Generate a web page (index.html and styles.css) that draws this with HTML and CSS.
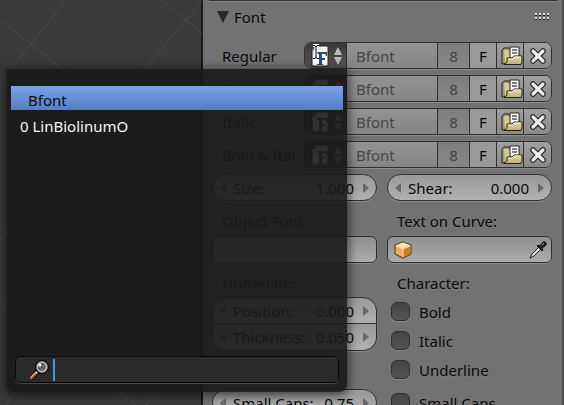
FILE: index.html
```html
<!DOCTYPE html>
<html lang="en">
<head>
<meta charset="utf-8">
<title>Font panel</title>
<link rel="stylesheet" href="styles.css">
</head>
<body>
<svg width="0" height="0" class="defs" aria-hidden="true">
  <defs>
    <linearGradient id="paper" x1="0" y1="0" x2="1" y2="1"><stop offset="0" stop-color="#d0d0d0"/><stop offset=".5" stop-color="#fff"/></linearGradient>
    <linearGradient id="wood" x1="0" y1="0" x2="0" y2="1"><stop offset="0" stop-color="#e5dca9"/><stop offset="1" stop-color="#bcae78"/></linearGradient>
    <radialGradient id="lens" cx=".3" cy=".35" r=".8"><stop offset="0" stop-color="#d8d8e4"/><stop offset=".3" stop-color="#55525a"/><stop offset="1" stop-color="#b8988c"/></radialGradient>
    <symbol id="font" viewBox="0 0 18 22">
      <path d="M1 5 5 1H17V21H1Z" fill="url(#paper)" stroke="#222"/>
      <path d="M1 5H5V1Z" fill="#aaa" stroke="#555" stroke-width=".6"/>
      <path d="M6 7H16V11H15L14 9H11V13H14V15H11V19H12V20H6V19H8V9H6Z" fill="#244a8c"/>
    </symbol>
    <symbol id="folder" viewBox="0 0 22 20">
      <path d="M1 18V4L3 2H8L10 4V17Z" fill="#a39b70" stroke="#25230f"/>
      <path d="M3 4H7L9 6V16L4 17Z" fill="#d3cb98"/>
      <path d="M9 1H18V12H9Z" fill="#fff" stroke="#222"/>
      <path d="M11 4H16M11 7H16" stroke="#555" stroke-width="1.400"/>
      <path d="M3 18.500 6 16V12H11L13 10H21V16L20 18.500Z" fill="url(#wood)" stroke="#25230f"/>
      <path d="M7 13H11L13 11H20" fill="none" stroke="#f7f0c9"/>
    </symbol>
    <symbol id="cross" viewBox="0 0 18 18">
      <path d="M4 4 14 14M14 4 4 14" stroke="#222" stroke-width="5.600" stroke-linecap="round"/>
      <path d="M4 4 14 14M14 4 4 14" stroke="#eee" stroke-width="3.200" stroke-linecap="round"/>
    </symbol>
  </defs>
</svg>
<main class="screen">
  <section class="viewport" aria-label="3D view">
    <svg class="gridlines" width="202" height="405" viewBox="0 0 202 405" fill="none" stroke="#505050">
      <path d="M0 20 202 179M161 0 202 33M66 0 0 83M202 1 0 240M0 302 136 405M202 190 5 405M202 335 145 405"/>
    </svg>
  </section>
  <aside class="panel">
    <header class="head"><svg width="12" height="12" viewBox="0 0 12 12"><path d="M0 0H12L6 12Z" fill="#292929"/></svg><h1>Font</h1>
      <svg class="grip" width="15" height="7" viewBox="0 0 15 7"><path d="M0 1H15M0 5H15" stroke="#ddd" stroke-width="2" stroke-dasharray="2 2"/><path d="M0 2.500H15M0 6.500H15" stroke="#222" stroke-dasharray="2 2"/></svg>
    </header>
    <div class="slots">
      <div class="slot"><label for="f1">Regular</label><div class="group"><button class="pick" aria-label="Browse font"><svg width="18" height="22"><use href="#font"/></svg><svg width="8" height="18" viewBox="0 0 8 18"><path d="M0 8 4 0 8 8ZM0 10H8L4 18Z" fill="#bbb"/></svg></button><input id="f1" class="name" value="Bfont" readonly><button class="users">8</button><button class="fake">F</button><button class="icon open" aria-label="Open"><svg width="22" height="20"><use href="#folder"/></svg></button><button class="icon last" aria-label="Unlink"><svg width="18" height="18"><use href="#cross"/></svg></button></div></div>
      <div class="slot"><label for="f2">Bold</label><div class="group"><button class="pick" aria-label="Browse font"><svg width="18" height="22"><use href="#font"/></svg><svg width="8" height="18" viewBox="0 0 8 18"><path d="M0 8 4 0 8 8ZM0 10H8L4 18Z" fill="#bbb"/></svg></button><input id="f2" class="name" value="Bfont" readonly><button class="users">8</button><button class="fake">F</button><button class="icon open" aria-label="Open"><svg width="22" height="20"><use href="#folder"/></svg></button><button class="icon last" aria-label="Unlink"><svg width="18" height="18"><use href="#cross"/></svg></button></div></div>
      <div class="slot"><label for="f3">Italic</label><div class="group"><button class="pick" aria-label="Browse font"><svg width="18" height="22"><use href="#font"/></svg><svg width="8" height="18" viewBox="0 0 8 18"><path d="M0 8 4 0 8 8ZM0 10H8L4 18Z" fill="#bbb"/></svg></button><input id="f3" class="name" value="Bfont" readonly><button class="users">8</button><button class="fake">F</button><button class="icon open" aria-label="Open"><svg width="22" height="20"><use href="#folder"/></svg></button><button class="icon last" aria-label="Unlink"><svg width="18" height="18"><use href="#cross"/></svg></button></div></div>
      <div class="slot"><label for="f4">Bold &amp; Ital</label><div class="group"><button class="pick" aria-label="Browse font"><svg width="18" height="22"><use href="#font"/></svg><svg width="8" height="18" viewBox="0 0 8 18"><path d="M0 8 4 0 8 8ZM0 10H8L4 18Z" fill="#bbb"/></svg></button><input id="f4" class="name" value="Bfont" readonly><button class="users">8</button><button class="fake">F</button><button class="icon open" aria-label="Open"><svg width="22" height="20"><use href="#folder"/></svg></button><button class="icon last" aria-label="Unlink"><svg width="18" height="18"><use href="#cross"/></svg></button></div></div>
    </div>
    <div class="columns">
      <div class="col">
        <div class="num"><i class="prev"></i><label for="size">Size:</label><input id="size" value="1.000"><i class="next"></i></div>
        <label class="title" for="objfont">Object Font:</label>
        <input id="objfont" class="object">
        <h2 class="title sub">Underline:</h2>
        <div class="num top"><i class="prev"></i><label for="pos">Position:</label><input id="pos" value="0.000"><i class="next"></i></div>
        <div class="num bottom"><i class="prev"></i><label for="thick">Thickness:</label><input id="thick" value="0.050"><i class="next"></i></div>
        <div class="num caps"><i class="prev"></i><label for="caps">Small Caps:</label><input id="caps" value="0.75"><i class="next"></i></div>
      </div>
      <div class="col">
        <div class="num"><i class="prev"></i><label for="shear">Shear:</label><input id="shear" value="0.000"><i class="next"></i></div>
        <label class="title" for="curve">Text on Curve:</label>
        <div class="object">
          <svg width="18" height="18" viewBox="0 0 18 18"><path d="M9 1 17 4V13L9 17 1 13V4Z" fill="#f0ab60" stroke="#4b2a0b"/><path d="M9 1.500 16.500 4.300 9 7.500 1.500 4.300Z" fill="#ffe0b0"/><path d="M9 7.500V16.500L16.500 12.700V4.300Z" fill="#d07a28"/><path d="M2 5 9 8 16 5M9 8V16" stroke="#ffe4b8" fill="none"/></svg>
          <input id="curve">
          <button class="dropper" aria-label="Eyedropper"><svg width="18" height="18" viewBox="0 0 18 18"><path d="M1 17 3 13 10 6 12 8 5 15Z" fill="#ddd" stroke="#222"/><path d="M8 5 9 4 11 5 14 1Q16 0 17 2 18 4 16 5L13 7 14 9 13 10Z" fill="#222" stroke="#111"/><path d="m13 4 2-2" stroke="#aaa"/></svg></button>
        </div>
        <h2 class="title sub">Character:</h2>
        <label class="check"><input type="checkbox">Bold</label>
        <label class="check"><input type="checkbox">Italic</label>
        <label class="check"><input type="checkbox">Underline</label>
        <label class="check apart"><input type="checkbox">Small Caps</label>
      </div>
    </div>
  </aside>
  <div class="popup">
    <div class="options" role="listbox">
      <button class="option active" role="option" aria-selected="true">Bfont</button>
      <button class="option" role="option">0 LinBiolinumO</button>
    </div>
    <div class="search">
      <svg width="20" height="20" viewBox="0 0 20 20"><path d="M2 18 9 11" stroke="#111" stroke-width="5" stroke-linecap="round"/><path d="M2 18 7 13" stroke="#b8683c" stroke-width="3" stroke-linecap="round"/><path d="M2 17 7 12" stroke="#edb28e"/><path d="m7 13 2-2" stroke="#ddd" stroke-width="2"/><circle cx="13" cy="7" r="6" fill="url(#lens)" stroke="#080808" stroke-width="2"/><circle cx="13" cy="7" r="5" fill="none" stroke="#c8c8c8" stroke-width="1.300"/><circle cx="11" cy="5" r="1.300" fill="#fff"/></svg>
      <span class="caret"></span>
      <input aria-label="Search">
    </div>
  </div>
  <svg class="pointer" width="8" height="16" viewBox="0 0 8 16"><path d="M1 1.500H3L4 3 5 1.500H7M4 3V13M1 14.500H3L4 13 5 14.500H7" fill="none" stroke="#fff" stroke-width="3"/><path d="M1 1.500H3L4 3 5 1.500H7M4 3V13M1 14.500H3L4 13 5 14.500H7" fill="none" stroke="#000"/></svg>
</main>
</body>
</html>
```
FILE: styles.css
```css
* { box-sizing: border-box; }
body { margin: 0; background: #3a3a3a; color: #080808; font: 15px/20px "Noto Sans", sans-serif; }
.defs { position: absolute; }
button, input { font: inherit; color: inherit; margin: 0; padding: 0; border: 0; background: none; min-width: 0; outline: 0; }
h1, h2 { margin: 0; font: inherit; }
svg { display: block; flex: none; }
.screen { position: relative; display: grid; grid-template-columns: 101fr 181fr; height: 100vh; overflow: hidden; }
.viewport { min-width: 0; overflow: hidden; }
.gridlines { opacity: .8; }
.panel { min-width: 0; margin-left: -1px; background: #727272; border-left: 2px solid #191919; border-right: 2px solid #4c4c4c; padding: 0 10px 0 9px; text-shadow: 0 1px #7d7d7d; }
.head { display: flex; align-items: center; height: 42px; margin: 0 -5px 0 -3px; padding: 0 7px 10px 8px; gap: 5px; border-top: 1px solid #333; box-shadow: inset 0 1px #858585; }
.grip { margin-left: auto; }
.slots { display: grid; gap: 6px; }
.slot { display: grid; grid-template-columns: 82px minmax(0, 1fr); padding-left: 10px; align-items: center; }
.slot > label { white-space: nowrap; }
.group { display: flex; height: 27px; border: 1px solid #303030; border-radius: 7px; background: linear-gradient(#939393, #858585); box-shadow: 0 1px #8b8b8b; overflow: hidden; }
.group > * { border-right: 1px solid #303030; }
.pick { display: flex; align-items: center; justify-content: space-between; width: 42px; padding: 0 4px 0 6px; background: linear-gradient(#393939, #555); }
.name { flex: 1; padding: 0 0 0 9px; color: #454545; }
.users { width: 32px; color: #454545; background: linear-gradient(#7d7d7d, #878787); }
.fake { width: 27px; background: #999; }
.icon { display: grid; place-items: center; width: 27px; background: linear-gradient(#a0a0a0, #8a8a8a); }
.open { padding-left: 4px; }
.last { border-right: 0; }
.columns { display: grid; grid-template-columns: repeat(2, minmax(0, 1fr)); gap: 10px; padding-top: 6px; }
.col { display: flex; flex-direction: column; min-width: 0; }
.num { display: flex; align-items: center; height: 27px; padding: 0 7px; border: 1px solid #303030; border-radius: 14px; background: linear-gradient(#999, #b1b1b1); box-shadow: 0 1px #8b8b8b; text-shadow: none; }
.num label { margin-left: 7px; white-space: nowrap; }
.num input { flex: 1; width: 20px; padding: 0 9px 0 0; text-align: right; }
.prev, .next { border: 5px solid transparent; flex: none; }
.prev { border-right: 6px solid #686868; border-left: 0; }
.next { border-left: 6px solid #686868; border-right: 0; }
.title { height: 35px; padding: 10px 10px 0; }
.object { display: flex; align-items: center; width: 100%; height: 27px; padding: 0 4px 0 6px; border: 1px solid #303030; border-radius: 6px; background: linear-gradient(#8f8f8f, #acacac); box-shadow: 0 1px #8b8b8b; }
.object input { flex: 1; }
.sub { height: 34px; }
.top { border-radius: 14px 14px 0 0; box-shadow: none; }
.bottom { border-radius: 0 0 14px 14px; border-top: 0; }
.caps { margin-top: 38px; }
.check { display: flex; align-items: center; gap: 9px; height: 29px; padding-left: 4px; }
.check input { appearance: none; width: 19px; height: 19px; border: 1px solid #303030; border-radius: 6px; background: linear-gradient(#454545, #535353); box-shadow: 0 1px #8b8b8b; }
.apart { margin-top: 4px; }
.popup { position: absolute; top: 69px; bottom: 13px; left: 7px; width: calc(60% + 2px); display: flex; flex-direction: column; padding: 17px 4px 9px; background: rgba(25, 25, 25, .9); border-radius: 0 0 7px 7px; box-shadow: 0 2px 10px 2px rgba(0, 0, 0, .55); }
.options { flex: 1; }
.option { display: block; width: 100%; height: 24px; margin-bottom: 2px; padding: 4px 9px 0; line-height: 20px; text-align: left; color: #f5f5f5; }
.active { padding-left: 17px; color: #0a0a0a; background: linear-gradient(#78a3e8, #547dc5); }
.search { display: flex; align-items: center; height: 27px; margin: 0 4px; padding: 0 2px 0 13px; border: 1px solid #080808; border-radius: 5px; background: #2b2b2b; box-shadow: 0 1px #454545; }
.caret { width: 2px; height: 22px; margin-left: 4px; background: #3b9ce4; }
.search input { flex: 1; color: #eee; }
.pointer { position: absolute; left: 312px; top: 44px; }
```
